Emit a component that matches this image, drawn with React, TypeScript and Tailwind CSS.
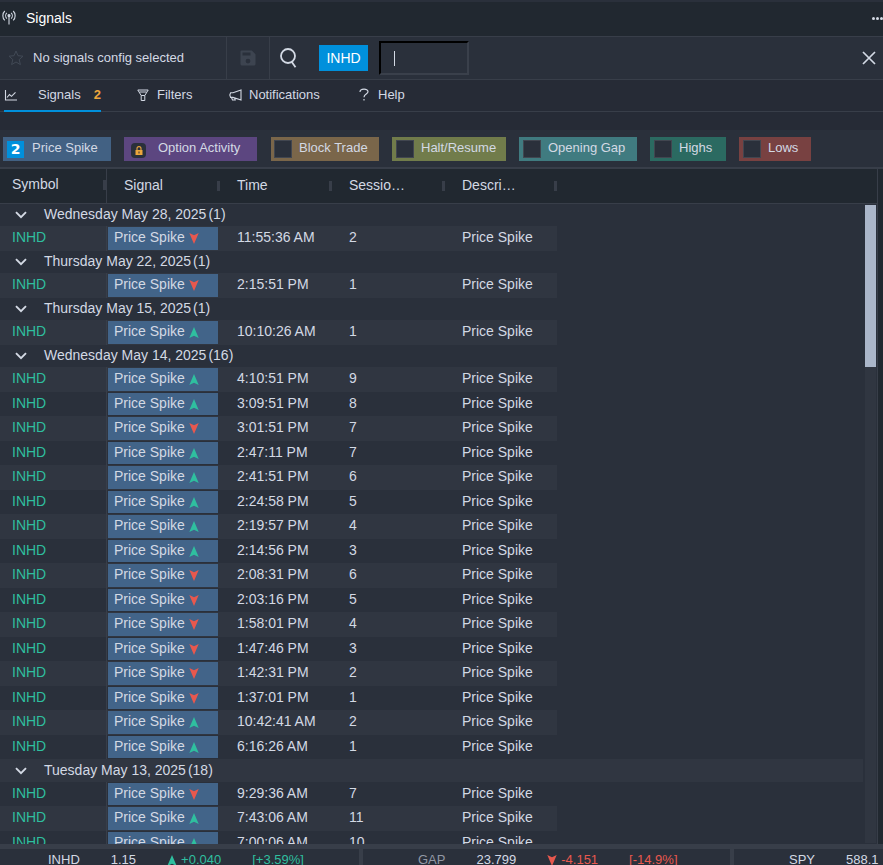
import { clsx } from 'clsx'

type Direction = 'up' | 'down'

interface SignalRow {
  time: string
  session: number
  direction: Direction
}

interface SignalGroup {
  date: string
  count: number
  rows: SignalRow[]
}

const row = (time: string, session: number, direction: Direction): SignalRow => ({ time, session, direction })

const groups: SignalGroup[] = [
  { date: 'Wednesday May 28, 2025', count: 1, rows: [row('11:55:36 AM', 2, 'down')] },
  { date: 'Thursday May 22, 2025', count: 1, rows: [row('2:15:51 PM', 1, 'down')] },
  { date: 'Thursday May 15, 2025', count: 1, rows: [row('10:10:26 AM', 1, 'up')] },
  {
    date: 'Wednesday May 14, 2025',
    count: 16,
    rows: [
      row('4:10:51 PM', 9, 'up'),
      row('3:09:51 PM', 8, 'up'),
      row('3:01:51 PM', 7, 'down'),
      row('2:47:11 PM', 7, 'up'),
      row('2:41:51 PM', 6, 'up'),
      row('2:24:58 PM', 5, 'up'),
      row('2:19:57 PM', 4, 'up'),
      row('2:14:56 PM', 3, 'up'),
      row('2:08:31 PM', 6, 'down'),
      row('2:03:16 PM', 5, 'down'),
      row('1:58:01 PM', 4, 'down'),
      row('1:47:46 PM', 3, 'down'),
      row('1:42:31 PM', 2, 'down'),
      row('1:37:01 PM', 1, 'down'),
      row('10:42:41 AM', 2, 'up'),
      row('6:16:26 AM', 1, 'up'),
    ],
  },
  {
    date: 'Tuesday May 13, 2025',
    count: 18,
    rows: [
      row('9:29:36 AM', 7, 'down'),
      row('7:43:06 AM', 11, 'up'),
      row('7:00:06 AM', 10, 'up'),
    ],
  },
]

type Line = { kind: 'group'; group: SignalGroup } | { kind: 'signal'; signal: SignalRow }

// groups and signals share one list so the striping runs through both
const lines: Line[] = groups.flatMap((group) => [
  { kind: 'group' as const, group },
  ...group.rows.map((signal) => ({ kind: 'signal' as const, signal })),
])

const toggles = [
  { label: 'Block Trade', className: 'w-[108px] bg-[#7a664a] pl-[3px]' },
  { label: 'Halt/Resume', className: 'w-[114px] bg-[#717c4b] pl-1' },
  { label: 'Opening Gap', className: 'w-[118px] bg-[#407b80] pl-1' },
  { label: 'Highs', className: 'w-[76px] bg-[#2b6a61] pl-1' },
  { label: 'Lows', className: 'w-[72px] bg-[#784141] pl-1' },
]

const columns = ['Symbol', 'Signal', 'Time', 'Sessio…', 'Descri…']

const tickers = [
  { symbol: 'INHD', price: '1.15', direction: 'up' as Direction, change: '+0.040', percent: '[+3.59%]', className: 'w-[359px] pl-12' },
  { symbol: 'GAP', price: '23.799', direction: 'down' as Direction, change: '-4.151', percent: '[-14.9%]', className: 'w-[371px] border-l-4 pl-[55px]' },
  { symbol: 'SPY', price: '588.1', direction: 'up' as Direction, change: '', percent: '', className: 'w-[371px] border-l-4 pl-[55px]' },
]

const Arrow = ({ direction }: { direction: Direction }) => (
  <svg
    width="10"
    height="11"
    viewBox="0 0 10 11"
    className={clsx('shrink-0', direction === 'up' ? 'text-[#2fbf9f]' : 'rotate-180 text-[#e8584e]')}
    fill="currentColor"
    aria-hidden="true"
  >
    <path d="M5 0 9.7 11 5 8.8.3 11Z" />
  </svg>
)

const AntennaIcon = () => (
  <svg width="14" height="15" viewBox="0 0 14 15" fill="none" stroke="currentColor" strokeWidth="1.1" aria-hidden="true">
    <path d="M2.8 1C.2 3.4.2 8 2.8 10.4M4.8 2.8c-1.5 1.6-1.5 4.2 0 5.8M11.2 1c2.6 2.4 2.6 7 0 9.4M9.2 2.8c1.5 1.6 1.5 4.2 0 5.8M7 6v8.5" />
    <circle cx="7" cy="5.6" r="1" fill="currentColor" />
  </svg>
)

const StarIcon = () => (
  <svg width="16" height="16" viewBox="0 0 16 16" fill="none" stroke="currentColor" aria-hidden="true">
    <path d="m8 1 2 4.7 5 .5-3.8 3.4 1.2 5L8 12l-4.4 2.6 1.2-5L1 6.2l5-.5Z" />
  </svg>
)

const SaveIcon = () => (
  <svg width="16" height="16" viewBox="0 0 16 16" fill="currentColor" fillRule="evenodd" aria-hidden="true">
    <path d="M1.5.5h10.3l3.7 3.7v9.8a1.5 1.5 0 0 1-1.5 1.5H2A1.5 1.5 0 0 1 .5 14V1.5a1 1 0 0 1 1-1ZM2.5 2.5v3h8v-3ZM8 8.7a2.4 2.4 0 1 0 0 4.8 2.4 2.4 0 0 0 0-4.8Z" />
  </svg>
)

const SearchIcon = () => (
  <svg width="18" height="20" viewBox="0 0 18 20" fill="none" stroke="currentColor" strokeWidth="1.8" aria-hidden="true">
    <circle cx="8" cy="8" r="7" />
    <path d="m11.5 13.5 4 5.8" />
  </svg>
)

const CloseIcon = () => (
  <svg width="14" height="14" viewBox="0 0 14 14" fill="none" stroke="currentColor" strokeWidth="1.7" aria-hidden="true">
    <path d="m1 1 12 12M13 1 1 13" />
  </svg>
)

const ChartIcon = () => (
  <svg width="13" height="12" viewBox="0 0 13 12" fill="none" stroke="currentColor" strokeWidth="1.1" aria-hidden="true">
    <path d="M1.5 1v10H13M3 8.5l2.5-3 2 1.8 4-4" />
  </svg>
)

const FilterIcon = () => (
  <svg width="12" height="12" viewBox="0 0 12 12" fill="none" stroke="currentColor" aria-hidden="true">
    <path d="M.8 1h10.4L7.8 6.5v5H4.2v-5ZM2.5 3h7M4.2 6.5h3.6" />
  </svg>
)

const MegaphoneIcon = () => (
  <svg width="13" height="12" viewBox="0 0 13 12" fill="none" stroke="currentColor" strokeWidth="1.1" aria-hidden="true">
    <path d="M12 1v10L4 8.4H1.6L.8 6l.8-2.2H4ZM2.5 8.5l1 2.5h2.7L5.7 9" />
  </svg>
)

const QuestionIcon = () => (
  <svg width="10" height="13" viewBox="0 0 10 13" fill="none" stroke="currentColor" strokeWidth="1.2" aria-hidden="true">
    <path d="M1 4C1 .2 9 .2 9 3.7 9 6 5 6 5 9.2M5 11v1.4" />
  </svg>
)

const ChevronIcon = () => (
  <svg width="12" height="8" viewBox="0 0 12 8" fill="none" stroke="currentColor" strokeWidth="1.9" aria-hidden="true">
    <path d="m1 1.2 5 5 5-5" />
  </svg>
)

const LockIcon = () => (
  <svg width="8" height="9" viewBox="0 0 8 9" fill="none" aria-hidden="true">
    <path d="M2 4.5V2.6a2 2 0 0 1 4 0v1.9" stroke="#eda63c" strokeWidth="1.1" />
    <path d="M.5 4h7v5h-7Z" fill="#eda63c" />
    <path d="M4 5.5v2" stroke="#2a303b" />
  </svg>
)

const TitleBar = () => (
  <header className="flex h-[37px] shrink-0 items-center border-t-2 border-b border-t-[#2a303b] border-b-[#383e49] bg-[#212830] pb-1 pl-0.5">
    <AntennaIcon />
    <h1 className="ml-2.5 flex-1 pt-0.5 text-sm leading-5 text-white">Signals</h1>
    <button aria-label="More options" className="flex gap-px overflow-hidden pt-0.5">
      <span className="size-[3px] rounded-full bg-[#d3d9e4]" />
      <span className="size-[3px] rounded-full bg-[#d3d9e4]" />
      <span className="size-[3px] rounded-full bg-[#d3d9e4]" />
    </button>
  </header>
)

const Toolbar = () => (
  <div className="flex h-[43px] shrink-0 items-center border-b border-[#383e49]">
    <div className="flex h-full w-[227px] items-center gap-[9px] border-r border-[#383e49] pl-2">
      <button aria-label="Favorite" className="text-[#414955]">
        <StarIcon />
      </button>
      <span>No signals config selected</span>
    </div>
    <button aria-label="Save" className="flex h-full w-[43px] items-center justify-center border-r border-[#383e49] text-[#3d4450]">
      <SaveIcon />
    </button>
    <button aria-label="Search" className="ml-2.5">
      <SearchIcon />
    </button>
    <button className="ml-[21px] h-[26px] w-[49px] bg-[#0090dc] text-sm text-white">INHD</button>
    <div className="ml-[11px] flex h-[34px] w-[90px] items-center border-2 border-t-black border-r-[#3a404b] border-b-[#3a404b] border-l-black pl-[13px]">
      <span className="h-[15px] w-px bg-[#d3d9e4]" />
      <input aria-label="Add symbol" className="w-full min-w-0 bg-transparent outline-none" />
    </div>
    <button aria-label="Close" className="mr-[7px] ml-auto">
      <CloseIcon />
    </button>
  </div>
)

const Tabs = () => (
  <nav className="flex h-8 shrink-0 items-stretch border-b border-[#383e49] bg-[#262b36] pl-1">
    <button className="-mb-px flex w-[97px] items-center gap-[21px] border-b-2 border-[#0090dc]">
      <ChartIcon />
      <span>Signals</span>
      <span className="-ml-2 font-bold text-[#eda63c]">2</span>
    </button>
    <button className="ml-9 flex w-14 items-center gap-2 pb-0.5">
      <FilterIcon />
      Filters
    </button>
    <button className="ml-9 flex w-[94px] items-center gap-[7px] pb-0.5">
      <MegaphoneIcon />
      Notifications
    </button>
    <button className="ml-9 flex items-center gap-[9px] pb-0.5">
      <QuestionIcon />
      Help
    </button>
  </nav>
)

const SignalChips = () => (
  <div className="mt-[18px] flex h-[39px] shrink-0 items-start gap-[13px] border-b-2 border-[#383e49] bg-[#2a303b] pt-[7px] pl-[3px]">
    <button className="flex h-6 w-[108px] items-center gap-2 bg-[#426183] pl-1">
      <span className="size-[17px] bg-[#0090dc] font-['DejaVu_Sans'] text-sm leading-[17px] font-bold text-white">2</span>
      <span className="pb-0.5">Price Spike</span>
    </button>
    <button className="mr-px flex h-6 w-[133px] items-center gap-3 bg-[#5c4680] pl-[7px]">
      <span className="mt-0.5 flex size-[15px] items-center justify-center rounded-sm bg-[#2a303b]">
        <LockIcon />
      </span>
      <span className="pb-0.5">Option Activity</span>
    </button>
    {toggles.map((toggle) => (
      <label key={toggle.label} className={clsx('flex h-6 items-center gap-[7px]', toggle.className)}>
        <input type="checkbox" className="size-[18px] appearance-none border border-[#414650] bg-[#2a303b]" />
        <span className="pb-0.5">{toggle.label}</span>
      </label>
    ))}
  </div>
)

const GroupRow = ({ group, striped }: { group: SignalGroup; striped: boolean }) => (
  <tr className={striped ? 'h-[23px] bg-[#303641]' : 'h-[22px]'}>
    <th colSpan={6} className="p-0 pb-0.5 text-left font-normal">
      <button className="flex items-center gap-[17px] pl-[15px] text-sm leading-5">
        <span className="pt-0.5">
          <ChevronIcon />
        </span>
        <span>
          {group.date}
          <span className="ml-0.5">({group.count})</span>
        </span>
      </button>
    </th>
  </tr>
)

const SignalLine = ({ signal, striped }: { signal: SignalRow; striped: boolean }) => {
  const cell = clsx('p-0 pb-[3px] pl-[17px]', striped && 'bg-[#303641]')
  return (
    <tr className={striped ? 'h-[25px]' : 'h-6'}>
      <td className={clsx('border-r border-[#383e49] p-0 pb-[3px] pl-3', striped && 'bg-[#303641]')}>
        <a href="#" className="text-[#2fbf9f]">INHD</a>
      </td>
      <td className={clsx('p-0 pr-0.5 pl-px', striped && 'bg-[#303641]')}>
        <div className={clsx('flex items-center gap-1 bg-[#426489] pl-1.5', striped ? 'h-[23px]' : 'h-[22px]')}>
          <span className="pb-[3px]">Price Spike</span>
          <Arrow direction={signal.direction} />
        </div>
      </td>
      <td className={cell}>{signal.time}</td>
      <td className={cell}>{signal.session}</td>
      <td className={cell}>Price Spike</td>
      <td />
    </tr>
  )
}

const SignalsTable = () => (
  <main className="relative mr-[5px] min-h-0 flex-1 overflow-hidden border-r border-[#383e49] bg-[#2a303b]">
    <table className="w-full table-fixed border-separate border-spacing-0 text-sm leading-5">
      <colgroup>
        <col className="w-[107px]" />
        <col className="w-[113px]" />
        <col className="w-28" />
        <col className="w-[113px]" />
        <col className="w-28" />
        <col />
      </colgroup>
      <thead>
        <tr className="h-[35px] bg-[#212830]">
          {columns.map((name, index) => (
            <th
              key={name}
              className={clsx(
                'border-b border-[#383e49] p-0 text-left font-normal',
                index === 0 ? 'border-r pb-0.5 pl-3' : 'pl-[17px]',
              )}
            >
              <div className="flex items-center justify-between">
                <span className="pb-0.5">{name}</span>
                <span className="h-2.5 w-[3px] bg-[#383e49]" />
              </div>
            </th>
          ))}
          <th className="border-b border-[#383e49] p-0" />
        </tr>
      </thead>
      <tbody>
        {lines.map((line, index) =>
          line.kind === 'group' ? (
            <GroupRow key={index} group={line.group} striped={index % 2 === 1} />
          ) : (
            <SignalLine key={index} signal={line.signal} striped={index % 2 === 1} />
          ),
        )}
      </tbody>
    </table>

    {/* Scrollbar */}
    <div className="absolute top-[35px] right-0 bottom-0 w-3.5 bg-[#2a303b] pt-px pr-px pb-px pl-0.5">
      <div className="h-full bg-[#303641]">
        <div className="h-[162px] bg-[#aab6c9]" />
      </div>
    </div>
  </main>
)

const TickerBar = () => (
  <footer className="flex h-[21px] shrink-0 overflow-hidden border-t-[5px] border-[#383e49] bg-[#2a303b]">
    {tickers.map((ticker) => (
      <div key={ticker.symbol} className={clsx('flex shrink-0 items-start gap-[31px] border-[#383e49] pt-[3px] leading-4', ticker.className)}>
        <span className={ticker.symbol === 'GAP' ? 'text-[#9298a5]' : ''}>{ticker.symbol}</span>
        <span>{ticker.price}</span>
        {ticker.change && (
          <>
            <span className={clsx('flex items-center gap-1', ticker.direction === 'up' ? 'text-[#2fbf9f]' : 'text-[#e8584e]')}>
              <Arrow direction={ticker.direction} />
              {ticker.change}
            </span>
            <span className={ticker.direction === 'up' ? 'text-[#2fbf9f]' : 'text-[#e8584e]'}>{ticker.percent}</span>
          </>
        )}
      </div>
    ))}
  </footer>
)

export default function App() {
  return (
    <div className="flex h-screen flex-col overflow-hidden bg-[#262b36] font-['Liberation_Sans',Arial,sans-serif] text-[13px] text-[#d3d9e4]">
      <TitleBar />
      <div className="shrink-0 bg-[#2a303b]">
        <Toolbar />
      </div>
      <Tabs />
      <SignalChips />
      <div className="flex min-h-0 flex-1 flex-col bg-[#212830]">
        <SignalsTable />
      </div>
      <TickerBar />
    </div>
  )
}
